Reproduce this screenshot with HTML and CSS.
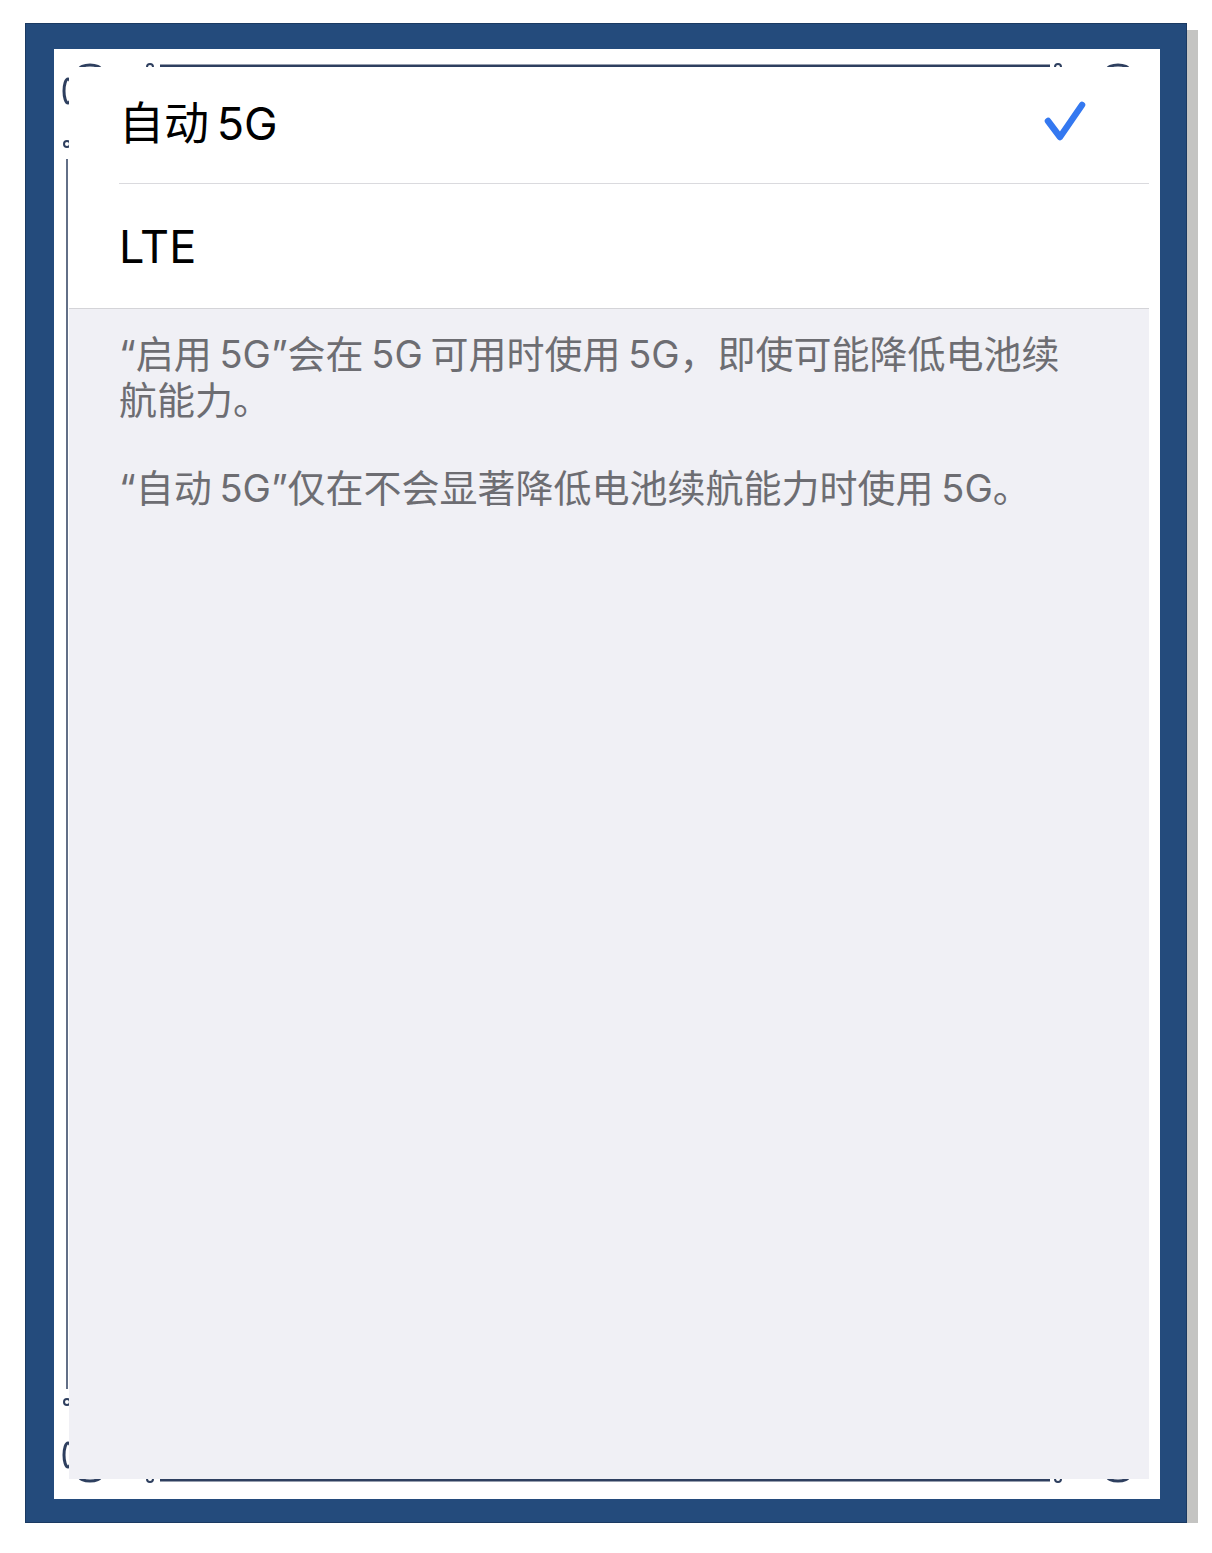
FILE: index.html
```html
<!DOCTYPE html>
<html lang="zh-CN">
<head>
    <meta charset="UTF-8">
    <title>语音与数据</title>
    <link rel="stylesheet" href="styles.css">
</head>
<body>
    <div class="frame">
        <div class="mat">
            <!-- ornamental line around the picture -->
            <svg class="ornament" width="1106" height="1450" viewBox="0 0 1106 1450">
                <g id="corner" fill="none" stroke="#2e3f5f">
                    <ellipse cx="37" cy="21" rx="11" ry="5" stroke-width="3"/>
                    <circle cx="97" cy="18" r="3" stroke-width="2"/>
                    <ellipse cx="15" cy="42" rx="4" ry="12" stroke-width="3"/>
                    <circle cx="14" cy="95" r="3" stroke-width="2"/>
                </g>
                <use href="#corner" transform="translate(1102 0) scale(-1 1)"/>
                <use href="#corner" transform="translate(0 1448) scale(1 -1)"/>
                <use href="#corner" transform="translate(1102 1448) scale(-1 -1)"/>
                <g stroke="#2e3f5f">
                    <line x1="107" y1="17" x2="997" y2="17" stroke-width="3"/>
                    <line x1="107" y1="1431" x2="997" y2="1431" stroke-width="3"/>
                    <line x1="14" y1="110" x2="14" y2="1340" stroke-width="1.5"/>
                    <line x1="1088" y1="110" x2="1088" y2="1340" stroke-width="1.5"/>
                </g>
            </svg>

            <div class="screen">
                <div class="list">
                    <div class="row first">
                        <div class="row-inner">
                            <span>自动 5G</span>
                            <svg class="check" width="44" height="44" viewBox="0 0 44 44">
                                <path d="M5 22 L17 38 L39 6" fill="none" stroke="#3478f0" stroke-width="6.5" stroke-linecap="round" stroke-linejoin="round"/>
                            </svg>
                        </div>
                    </div>
                    <div class="row">
                        <div class="row-inner last">
                            <span>LTE</span>
                        </div>
                    </div>
                </div>
                <div class="notes">
                    <p>“启用 5G”会在 5G 可用时使用 5G，即使可能降低电池续<br>航能力。</p>
                    <p>“自动 5G”仅在不会显著降低电池续航能力时使用 5G。</p>
                </div>
            </div>
        </div>
    </div>
</body>
</html>
```

FILE: styles.css
```css
body{
    margin: 0;
    background-color: #ffffff;
    font-family: "Inter", "Noto Sans CJK SC", sans-serif;
}
.frame{
    margin-left: 25px;
    margin-top: 23px;
    width: 1162px;
    height: 1500px;
    box-sizing: border-box;
    padding: 25px 28px 25px 28px;
    background-color: #244b7c;
    border: 1px solid #1b3a62;
    box-shadow: 11px 7px 0 #c4c4c2;
}
.mat{
    position: relative;
    width: 1106px;
    height: 1450px;
    background-color: #ffffff;
    padding-top: 18px;
    padding-left: 15px;
    box-sizing: border-box;
}
.ornament{
    position: absolute;
    left: -1px;
    top: 0;
}
.screen{
    position: relative;
    width: 1080px;
    height: 1412px;
    background-color: #f0f0f5;
}
.list{
    background-color: #ffffff;
    border-bottom: 1px solid #d4d4d8;
}
.row{
    padding-left: 50px;
    font-size: 45px;
    word-spacing: -5px;
    color: #000000;
}
.row-inner{
    box-sizing: border-box;
    height: 124px;
    padding-left: 0;
    padding-right: 62px;
    display: flex;
    align-items: center;
    justify-content: space-between;
    border-bottom: 1px solid #dadade;
}
.first .row-inner{
    height: 117px;
    padding-bottom: 10px;
}
.row-inner.last{
    border-bottom: none;
}
.check{
    margin-top: 2px;
}
.notes{
    padding: 22px 52px 0 50px;
    font-size: 38px;
    line-height: 46px;
    word-spacing: -3px;
    color: #6d6d72;
}
.notes p{
    margin: 0 0 42px 0;
}
```
